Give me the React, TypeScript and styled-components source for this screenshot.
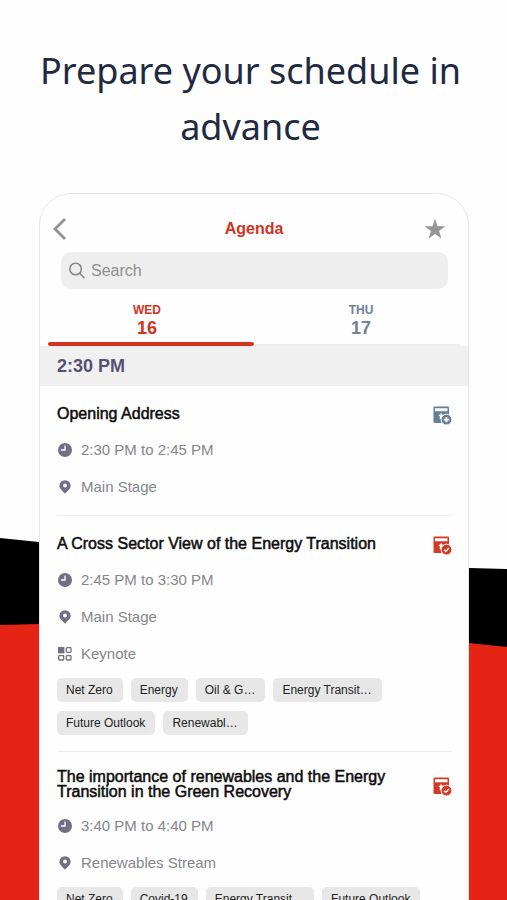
import React from "react";
import styled, { createGlobalStyle } from "styled-components";

const GlobalStyle = createGlobalStyle`
  *, *::before, *::after { box-sizing: border-box; }
  body { margin: 0; background: #fefefe; }
  button, input { font: inherit; }
`;

const Page = styled.main`
  position: relative;
  display: flex;
  flex-direction: column;
  height: 100vh;
  overflow: hidden;
  font-family: "Liberation Sans", Arial, Helvetica, sans-serif;
`;

const Backdrop = styled.svg`
  position: absolute;
  inset: 0;
  width: 100%;
  height: 100%;
`;

const Headline = styled.h1`
  position: relative;
  margin: 0;
  padding: 43px 30px 38px 24px;
  color: #1f2a40;
  font-family: "Noto Sans", "Open Sans", sans-serif;
  font-size: 36px;
  font-weight: 400;
  line-height: 56px;
  text-align: center;
`;

const Phone = styled.section`
  position: relative;
  flex: none;
  margin: 0 38px 0 39px;
  border: 1px solid #e6e6e6;
  border-radius: 32px 32px 0 0;
  background: #fefefe;
  overflow: hidden;
`;

const TopBar = styled.header`
  display: grid;
  grid-template-columns: 40px 1fr 40px;
  align-items: center;
  height: 58px;
  padding-top: 12px;
  padding-right: 13px;
`;

const IconButton = styled.button`
  display: grid;
  place-items: center;
  padding: 0;
  border: 0;
  background: none;
  cursor: pointer;
`;

const ScreenTitle = styled.h2`
  margin: 0;
  padding-left: 13px;
  color: #d4321f;
  font-size: 16px;
  line-height: 20px;
  text-align: center;
`;

const SearchBox = styled.label`
  display: flex;
  align-items: center;
  gap: 6px;
  height: 37px;
  margin: 0 20px 0 21px;
  padding: 0 8px;
  border-radius: 10px;
  background: #eeeeee;
`;

const SearchInput = styled.input`
  flex: 1;
  min-width: 0;
  padding: 0;
  border: 0;
  outline: 0;
  background: transparent;
  color: #333;
  font-size: 16px;
  line-height: 20px;
  &::placeholder { color: #8e8e8e; opacity: 1; }
`;

const Tabs = styled.div`
  display: grid;
  grid-template-columns: 1fr 1fr;
  margin: 0 8px;
  padding-top: 13px;
`;

const Tab = styled.button<{ $active?: boolean }>`
  display: flex;
  flex-direction: column;
  align-items: center;
  height: 44px;
  padding: 0 8px 0 0;
  border: 0;
  background: none;
  color: ${(p) => (p.$active ? "#d4321f" : "#71809a")};
  font-weight: 700;
  cursor: pointer;
  &:last-child { padding: 0 0 0 8px; }
  &::after {
    content: "";
    align-self: stretch;
    height: ${(p) => (p.$active ? "4px" : "2px")};
    margin: ${(p) => (p.$active ? "4px -8px 0 0" : "6px 0 0 -8px")};
    border-radius: 2px;
    background: ${(p) => (p.$active ? "#d4321f" : "#ececec")};
  }
`;

const Weekday = styled.span`
  font-size: 12px;
  line-height: 16px;
`;

const DayNumber = styled.span`
  font-size: 18px;
  line-height: 20px;
`;

const TimeBand = styled.h3`
  margin: 0;
  padding: 0 17px;
  background: #f0f0f0;
  color: #575073;
  font-size: 18px;
  line-height: 40px;
`;

const Sessions = styled.ul`
  margin: 0;
  padding: 0 16px 0 17px;
  list-style: none;
`;

const Session = styled.li`
  padding: 17px 0 16px;
  border-bottom: 1px solid #ececec;
`;

const SessionHead = styled.div`
  display: flex;
  align-items: center;
  justify-content: space-between;
  min-height: 20px;
  margin-bottom: 18px;
`;

const SessionTitle = styled.h4`
  max-width: 350px;
  margin: 0;
  color: #0c0c0c;
  font-size: 16px;
  font-weight: 400;
  line-height: 15px;
  -webkit-text-stroke: 0.5px #0c0c0c;
`;

const BookButton = styled(IconButton)`
  flex: none;
  height: 20px;
  padding-top: 3px;
`;

const Details = styled.div`
  display: grid;
  gap: 20px;
`;

const Detail = styled.div`
  display: flex;
  align-items: center;
  gap: 8px;
  height: 17px;
  color: #85858c;
  font-size: 15px;
  line-height: 17px;
`;

const Tags = styled.div`
  display: flex;
  flex-wrap: wrap;
  gap: 9px 8px;
  margin-top: 16px;
`;

const DetailsSpacer = styled.div`
  height: 4px;
`;

const Tag = styled.span`
  padding: 0 10px 0 9px;
  border-radius: 5px;
  background: #e7e7e7;
  color: #222;
  font-size: 12px;
  line-height: 24px;
`;

const ICON = "#716f86";

const Clock = () => (
  <svg width="16" height="16" viewBox="0 0 16 16" aria-hidden="true">
    <circle cx="8" cy="8" r="7" fill={ICON} />
    <path d="M8 3.5V8H4" fill="none" stroke="#fff" strokeWidth="1.3" />
  </svg>
);

const Pin = () => (
  <svg width="16" height="16" viewBox="0 0 16 16" aria-hidden="true">
    <path
      fill={ICON}
      fillRule="evenodd"
      d="M8 1.2a5.6 5.6 0 0 1 5.6 5.6c0 3.3-3.2 5-5.6 8-2.4-3-5.6-4.7-5.6-8A5.6 5.6 0 0 1 8 1.2Zm0 3.400a2 2 0 1 0 0 4 2 2 0 0 0 0-4Z"
    />
  </svg>
);

const Blocks = () => (
  <svg width="16" height="16" viewBox="0 0 16 16" aria-hidden="true" stroke={ICON} strokeWidth="1.3" fill="none">
    <rect x="1.7" y="1.7" width="5" height="5" fill={ICON} />
    <rect x="9.3" y="1.7" width="4.7" height="4.7" rx="0.8" />
    <rect x="1.7" y="9.7" width="5" height="4.3" rx="0.8" />
    <rect x="9.3" y="9.7" width="4.7" height="4.3" rx="0.8" />
  </svg>
);

const CalendarBadge = ({ booked }: { booked: boolean }) => {
  const color = booked ? "#d23a26" : "#667d98";
  return (
    <svg width="19" height="19" viewBox="0 0 19 19" aria-hidden="true">
      <path
        fill={color}
        fillRule="evenodd"
        d="M1.500 0.500h13.500a1 1 0 0 1 1 1V9h-2l-4.500 2.500-1 5.500H1.500a1 1 0 0 1-1-1V1.500a1 1 0 0 1 1-1ZM2 2.300V5.200h12.500V2.300Z"
      />
      <path fill="#fff" d="m8 6.600.9 1.900 2.100.3-1.500 1.500-.6 3.100-2.300-.6.300-2.200-1.600-1.600 2.100-.4Z" />
      <circle cx="13.500" cy="13.600" r="5.400" fill={color} stroke="#fff" strokeWidth="1" />
      {booked ? (
        <path d="m11.100 13.700 1.700 1.700 3.100-3.300" fill="none" stroke="#fff" strokeWidth="1.400" />
      ) : (
        <path d="M13.500 10.900v5.400M10.800 13.600h5.400" stroke="#fff" strokeWidth="1.900" />
      )}
    </svg>
  );
};

type SessionData = {
  title: string;
  time: string;
  place: string;
  kind?: string;
  booked: boolean;
  tags: string[];
};

const sessions: SessionData[] = [
  { title: "Opening Address", time: "2:30 PM to 2:45 PM", place: "Main Stage", booked: false, tags: [] },
  {
    title: "A Cross Sector View of the Energy Transition",
    time: "2:45 PM to 3:30 PM",
    place: "Main Stage",
    kind: "Keynote",
    booked: true,
    tags: ["Net Zero", "Energy", "Oil & G…", "Energy Transit…", "Future Outlook", "Renewabl…"],
  },
  {
    title: "The importance of renewables and the Energy Transition in the Green Recovery",
    time: "3:40 PM to 4:40 PM",
    place: "Renewables Stream",
    booked: true,
    tags: ["Net Zero", "Covid-19", "Energy Transit…", "Future Outlook"],
  },
];

export default function App() {
  return (
    <Page>
      <GlobalStyle />
      <Backdrop viewBox="0 0 507 900" preserveAspectRatio="none" aria-hidden="true">
        <path d="M0 538 39 542 469 568 507 569V900H0Z" fill="#000" />
        <path d="M0 625 39 624 469 643 507 647V900H0Z" fill="#e52415" />
      </Backdrop>
      <Headline>Prepare your schedule in advance</Headline>
      <Phone>
        <TopBar>
          <IconButton aria-label="Back">
            <svg width="16" height="24" viewBox="0 0 16 24" aria-hidden="true">
              <path d="M13 2 3 12l10 10" fill="none" stroke="#929292" strokeWidth="2.8" />
            </svg>
          </IconButton>
          <ScreenTitle>Agenda</ScreenTitle>
          <IconButton aria-label="Favourites">
            <svg width="22" height="22" viewBox="0 0 22 22" aria-hidden="true">
              <path
                fill="#969696"
                d="m11 .8 2.500 7.400 7.800.1-6.200 4.700 2.300 7.500L11 16l-6.400 4.500L6.900 13 .7 8.300l7.800-.1Z"
              />
            </svg>
          </IconButton>
        </TopBar>
        <SearchBox>
          <svg width="16" height="17" viewBox="0 0 16 17" fill="none" stroke="#858585" strokeWidth="1.5" aria-hidden="true">
            <circle cx="6.6" cy="7" r="5.8" />
            <path d="m10.800 11.300 4.700 4.900" />
          </svg>
          <SearchInput type="search" placeholder="Search" aria-label="Search" />
        </SearchBox>
        <Tabs role="tablist">
          <Tab role="tab" aria-selected="true" $active>
            <Weekday>WED</Weekday>
            <DayNumber>16</DayNumber>
          </Tab>
          <Tab role="tab" aria-selected="false">
            <Weekday>THU</Weekday>
            <DayNumber>17</DayNumber>
          </Tab>
        </Tabs>
        <TimeBand>2:30 PM</TimeBand>
        <Sessions>
          {sessions.map((s) => (
            <Session key={s.title}>
              <SessionHead>
                <SessionTitle>{s.title}</SessionTitle>
                <BookButton aria-label={s.booked ? "Remove from schedule" : "Add to schedule"}>
                  <CalendarBadge booked={s.booked} />
                </BookButton>
              </SessionHead>
              <Details>
                <Detail><Clock />{s.time}</Detail>
                <Detail><Pin />{s.place}</Detail>
                {s.kind && <Detail><Blocks />{s.kind}</Detail>}
              </Details>
              {s.tags.length > 0 ? (
                <Tags>{s.tags.map((t) => <Tag key={t}>{t}</Tag>)}</Tags>
              ) : (
                <DetailsSpacer />
              )}
            </Session>
          ))}
        </Sessions>
      </Phone>
    </Page>
  );
}
